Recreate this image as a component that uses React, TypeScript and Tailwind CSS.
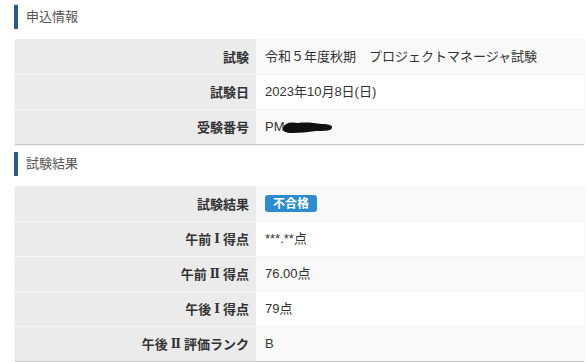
import { ReactNode } from "react";

type Row = {
  label: ReactNode;
  value: ReactNode;
};

const Num = (props: { children: string }) => (
  <span className="px-[3px] font-['DejaVu_Serif',serif] text-[12px]">{props.children}</span>
);

const APPLICATION_ROWS: Row[] = [
  { label: "試験", value: "令和５年度秋期　プロジェクトマネージャ試験" },
  { label: "試験日", value: "2023年10月8日(日)" },
  {
    label: "受験番号",
    value: (
      <span className="flex items-center">
        PM
        <svg width="52" height="14" viewBox="0 0 52 14" className="-ml-[3px]">
          <path
            d="M1 8 C3 2 10 2 16 3 C24 2 32 3 40 4 C46 4 51 5 50 8 C49 11 42 11 34 11 C26 12 18 13 10 13 C4 13 0 11 1 8 Z"
            fill="#111"
          />
        </svg>
      </span>
    ),
  },
];

const RESULT_ROWS: Row[] = [
  {
    label: "試験結果",
    value: (
      <span className="inline-flex h-[17px] items-center rounded-[3px] bg-[#2b8dcf] px-[8px] text-[12px] font-bold text-white">
        不合格
      </span>
    ),
  },
  { label: <>午前<Num>Ⅰ</Num>得点</>, value: "***.**点" },
  { label: <>午前<Num>Ⅱ</Num>得点</>, value: "76.00点" },
  { label: <>午後<Num>Ⅰ</Num>得点</>, value: "79点" },
  { label: <>午後<Num>Ⅱ</Num>評価ランク</>, value: "B" },
];

const SectionTitle = (props: { title: string; className?: string }) => {
  return (
    <div
      className={`ml-[14px] flex h-[24px] items-center border-l-4 border-[#2a5b8e] pl-2 text-[13px] text-[#555] ${props.className ?? ""}`}
    >
      {props.title}
    </div>
  );
};

const InfoTable = (props: { rows: Row[] }) => {
  return (
    <div className="ml-[15px] mr-[2px] shadow-[0_1px_1px_rgba(0,0,0,0.22)]">
      {props.rows.map((row, i) => (
        <div
          key={i}
          className={`flex h-[35px] ${i > 0 ? "border-t border-[#f4f4f4]" : ""}`}
        >
          <div className="flex w-[241px] shrink-0 items-center justify-end bg-[#ebebeb] pr-[7px] font-['Noto_Sans_CJK_JP',sans-serif] text-[13px] font-bold text-[#333]">
            {row.label}
          </div>
          <div
            className={`flex flex-1 items-center pl-[9px] text-[13px] text-[#333] ${
              i % 2 === 0 ? "bg-[#f9f9f9]" : "bg-white"
            }`}
          >
            {row.value}
          </div>
        </div>
      ))}
    </div>
  );
};

export default function App() {
  return (
    <div
      className="h-[362px] w-[586px] overflow-hidden bg-white pt-[5px]"
      style={{ fontFamily: '"Liberation Sans", "Noto Sans CJK JP", sans-serif' }}
    >
      <SectionTitle title="申込情報" className="mb-[10px]" />
      <InfoTable rows={APPLICATION_ROWS} />
      <SectionTitle title="試験結果" className="mb-[10px] mt-[8px]" />
      <InfoTable rows={RESULT_ROWS} />
    </div>
  );
}
